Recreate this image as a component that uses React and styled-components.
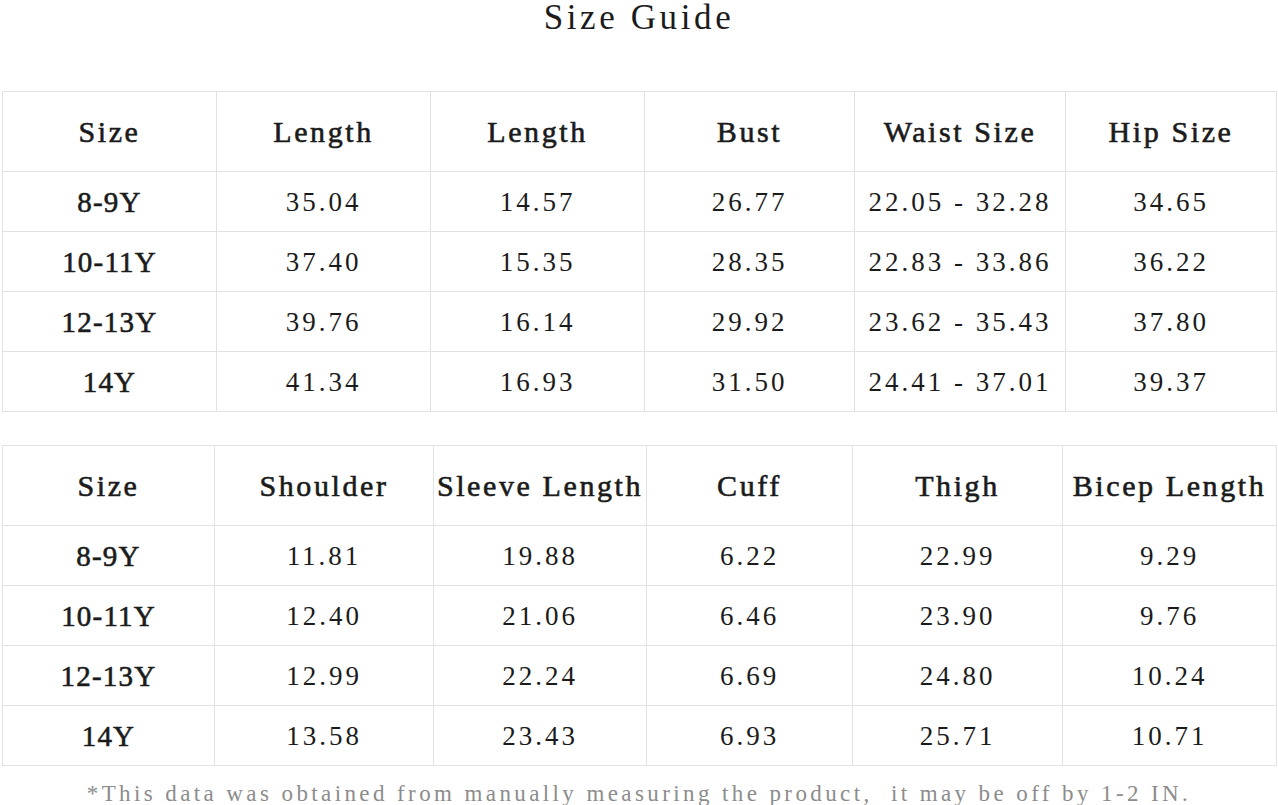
import React from 'react';
import styled, { createGlobalStyle } from 'styled-components';

const GlobalStyle = createGlobalStyle`
  html, body {
    margin: 0;
    padding: 0;
    background: #fff;
  }
  body {
    font-family: "Liberation Serif", "DejaVu Serif", serif;
    color: #1b1b1b;
  }
`;

const Page = styled.div`
  width: 1278px;
  display: flex;
  flex-direction: column;
  align-items: stretch;
`;

const Title = styled.h1`
  margin: 0 0 55px;
  height: 36px;
  line-height: 36px;
  font-size: 35px;
  font-weight: 400;
  letter-spacing: 3.6px;
  text-align: center;
`;

const Table = styled.table`
  margin: 0 0 0 2px;
  width: 1274px;
  table-layout: fixed;
  border-collapse: collapse;

  & + & {
    margin-top: 33px;
  }
`;

const HeadCell = styled.th`
  height: 79px;
  padding: 0;
  border: 1px solid #e2e2e2;
  font-size: 30px;
  line-height: 30px;
  font-weight: 400;
  -webkit-text-stroke: 0.6px currentColor;
  letter-spacing: 2.6px;
  text-align: center;
  white-space: nowrap;
`;

const Cell = styled.td`
  height: 59px;
  padding: 0;
  border: 1px solid #e2e2e2;
  text-align: center;
  white-space: nowrap;
  line-height: 28px;
  font-size: ${(p) => (p.$label ? '29px' : '27px')};
  font-weight: 400;
  -webkit-text-stroke: ${(p) => (p.$label ? '0.6px currentColor' : '0')};
  letter-spacing: ${(p) => (p.$label ? '1.2px' : '3px')};
`;

const Note = styled.p`
  margin: 0;
  padding-top: 14px;
  line-height: 28px;
  font-size: 23px;
  letter-spacing: 3.4px;
  color: #8c8c8c;
  text-align: center;
  white-space: nowrap;
`;

const tables = [
  {
    widths: [214, 214, 214, 210, 211, 211],
    head: ['Size', 'Length', 'Length', 'Bust', 'Waist Size', 'Hip Size'],
    rows: [
      ['8-9Y', '35.04', '14.57', '26.77', '22.05 - 32.28', '34.65'],
      ['10-11Y', '37.40', '15.35', '28.35', '22.83 - 33.86', '36.22'],
      ['12-13Y', '39.76', '16.14', '29.92', '23.62 - 35.43', '37.80'],
      ['14Y', '41.34', '16.93', '31.50', '24.41 - 37.01', '39.37'],
    ],
  },
  {
    widths: [212, 219, 213, 206, 210, 214],
    head: ['Size', 'Shoulder', 'Sleeve Length', 'Cuff', 'Thigh', 'Bicep Length'],
    rows: [
      ['8-9Y', '11.81', '19.88', '6.22', '22.99', '9.29'],
      ['10-11Y', '12.40', '21.06', '6.46', '23.90', '9.76'],
      ['12-13Y', '12.99', '22.24', '6.69', '24.80', '10.24'],
      ['14Y', '13.58', '23.43', '6.93', '25.71', '10.71'],
    ],
  },
];

const SizeTable = ({ widths, head, rows }) => (
  <Table>
    <colgroup>
      {widths.map((w, i) => (
        <col key={i} style={{ width: w }} />
      ))}
    </colgroup>
    <thead>
      <tr>
        {head.map((h, i) => (
          <HeadCell key={i}>{h}</HeadCell>
        ))}
      </tr>
    </thead>
    <tbody>
      {rows.map((row) => (
        <tr key={row[0]}>
          {row.map((v, i) => (
            <Cell key={i} $label={i === 0}>
              {v}
            </Cell>
          ))}
        </tr>
      ))}
    </tbody>
  </Table>
);

export default function App() {
  return (
    <>
      <GlobalStyle />
      <Page>
        <Title>Size Guide</Title>
        {tables.map((t, i) => (
          <SizeTable key={i} {...t} />
        ))}
        <Note>*This data was obtained from manually measuring the product,&nbsp; it may be off by 1-2 IN.</Note>
      </Page>
    </>
  );
}
